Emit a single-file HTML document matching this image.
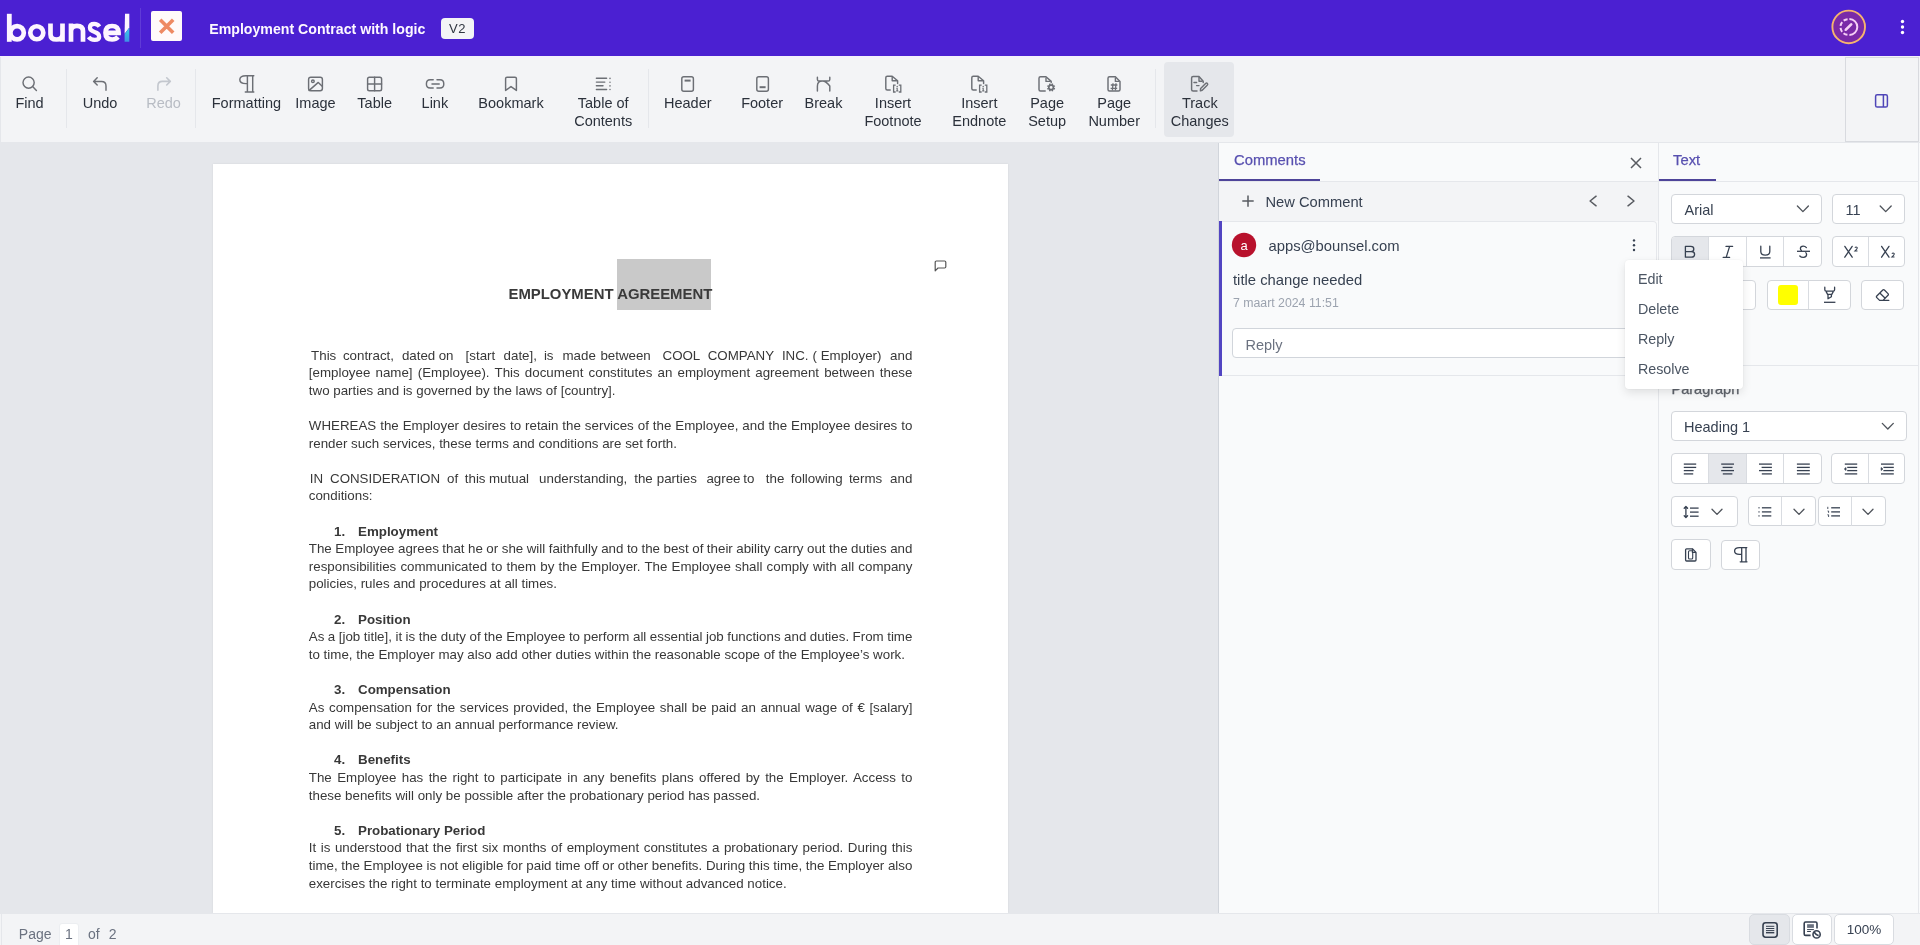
<!DOCTYPE html>
<html><head><meta charset="utf-8">
<style>
*{box-sizing:border-box;margin:0;padding:0}
html,body{width:1920px;height:945px;overflow:hidden;font-family:"Liberation Sans",sans-serif;background:#f3f4f6}
.t{position:absolute;white-space:nowrap}
#root{position:absolute;left:0;top:0;width:1920px;height:945px;overflow:hidden;will-change:transform}
.r{position:absolute}
.s{position:absolute;overflow:visible}
</style></head><body>
<div id="root">
<div class="r" style="left:0px;top:0px;width:1920px;height:56px;background:#4b20d2;border-radius:0px;"></div>
<svg class="s" style="left:0;top:0" width="140" height="56"><rect x="6.9" y="13.8" width="4.8" height="28" fill="#fdf5ff"/><circle cx="17.1" cy="32.75" r="6.7" fill="none" stroke="#fdf5ff" stroke-width="4.7"/><circle cx="36.8" cy="32.75" r="6.5" fill="none" stroke="#fdf5ff" stroke-width="4.7"/><path d="M50.5 23.6 V34.2 Q50.5 39.5 56.5 39.5 Q62.5 39.5 62.5 34.2 V23.6 M62.5 30 V41.8" fill="none" stroke="#fdf5ff" stroke-width="4.7"/><path d="M71 41.8 V31.2 Q71 25.9 77 25.9 Q83 25.9 83 31.2 V41.8 M71 35 V23.6" fill="none" stroke="#fdf5ff" stroke-width="4.7"/><path d="M99.4 26.6 Q97.6 23.8 94.2 23.8 Q89.9 23.8 89.9 27.6 Q89.9 30.6 94.6 31.9 Q99.2 33.2 99.2 36.9 Q99.2 39.8 94.6 39.8 Q90.6 39.8 88.6 37" fill="none" stroke="#fdf5ff" stroke-width="4.2"/><path d="M105.5 32.8 H118.6 Q118.6 26 112.1 26 Q105.5 26 105.5 32.8 Q105.5 39.5 112.1 39.5 Q115.8 39.5 118 37" fill="none" stroke="#fdf5ff" stroke-width="4.7"/><defs><linearGradient id="lg" x1="0" y1="0" x2="0" y2="1"><stop offset="0" stop-color="#38d0e6"/><stop offset="1" stop-color="#3f8fe6"/></linearGradient></defs><path d="M125 13.8 H129.3 V27.6 L124.6 33.8 Z" fill="#fdf5ff"/><path d="M129.3 27.8 V41.8 H124.6 V34 Z" fill="url(#lg)"/></svg>
<div class="r" style="left:140px;top:8px;width:1px;height:40px;background:rgba(255,255,255,0.12);border-radius:0px;"></div>
<div class="r" style="left:151px;top:11px;width:31px;height:30px;background:#fffafa;border-radius:2px;"></div>
<svg class="s" style="left:151px;top:11px" width="31" height="30"><path d="M9.2 8.8 L22.2 21.8 M22.2 8.8 L9.2 21.8" stroke="#ee8a63" stroke-width="3.6" stroke-linecap="butt"/></svg>
<div class="t" style="left:209.30px;top:21.25px;font-size:14.15px;line-height:17.69px;color:#fdf8ff;font-weight:bold;">Employment Contract with logic</div>
<div class="r" style="left:441px;top:18px;width:33px;height:21px;background:#f3f4f6;border-radius:4px;"></div>
<div class="t" style="left:441.00px;width:33px;text-align:center;top:21.07px;font-size:13px;line-height:16.25px;color:#2f3640;font-weight:normal;letter-spacing:0.6px;">V2</div>
<svg class="s" style="left:1828px;top:7px" width="42" height="42"><circle cx="20.7" cy="19.9" r="16.3" fill="#7a2aa8" stroke="#f6b46e" stroke-width="1.9"/><path d="M21.4 12.1 A7.9 7.9 0 0 1 21.4 27.9" fill="none" stroke="#f6d0f6" stroke-width="2"/><path d="M20.4 27.9 A7.9 7.9 0 0 1 20.4 12.1" fill="none" stroke="#f6d0f6" stroke-width="2" stroke-dasharray="4.2 2" stroke-dashoffset="-1"/><path d="M17.9 22.6 L23.2 17.4" stroke="#f6d0f6" stroke-width="2.7" stroke-linecap="round"/><path d="M16.6 23.9 L17.2 21.6 L18.9 23.3 Z" fill="#f6d0f6"/></svg>
<svg class="s" style="left:1896px;top:17px" width="14" height="20"><circle cx="6.5" cy="4.5" r="1.7" fill="#fff"/><circle cx="6.5" cy="10" r="1.7" fill="#fff"/><circle cx="6.5" cy="15.5" r="1.7" fill="#fff"/></svg>
<div class="r" style="left:0px;top:56px;width:1920px;height:86px;background:#f3f4f6;border-radius:0px;"></div>
<div class="r" style="left:0px;top:56px;width:1920px;height:3px;background:#f4f1fb;border-radius:0px;"></div>
<div class="r" style="left:0px;top:57px;width:1px;height:85px;background:#e5e7eb;border-radius:0px;"></div>
<div class="r" style="left:1164px;top:62px;width:70px;height:74.5px;background:#e5e7eb;border-radius:4px;"></div>
<div class="r" style="left:66px;top:69px;width:1px;height:59px;background:#e5e7eb;border-radius:0px;"></div>
<div class="r" style="left:195px;top:69px;width:1px;height:59px;background:#e5e7eb;border-radius:0px;"></div>
<div class="r" style="left:648px;top:69px;width:1px;height:59px;background:#e5e7eb;border-radius:0px;"></div>
<div class="r" style="left:1155px;top:69px;width:1px;height:59px;background:#e5e7eb;border-radius:0px;"></div>
<div class="r" style="left:1844.5px;top:57px;width:74px;height:84.5px;background:#f3f4f6;border:1px solid #d8dadf;border-radius:0px;"></div>
<div class="t" style="left:-30.50px;width:120px;text-align:center;top:93.72px;font-size:14.5px;line-height:18.12px;color:#2b313b;font-weight:normal;">Find</div>
<div class="t" style="left:40.00px;width:120px;text-align:center;top:93.72px;font-size:14.5px;line-height:18.12px;color:#2b313b;font-weight:normal;">Undo</div>
<div class="t" style="left:103.50px;width:120px;text-align:center;top:93.72px;font-size:14.5px;line-height:18.12px;color:#b8bcc4;font-weight:normal;">Redo</div>
<div class="t" style="left:186.40px;width:120px;text-align:center;top:93.72px;font-size:14.5px;line-height:18.12px;color:#2b313b;font-weight:normal;">Formatting</div>
<div class="t" style="left:255.50px;width:120px;text-align:center;top:93.72px;font-size:14.5px;line-height:18.12px;color:#2b313b;font-weight:normal;">Image</div>
<div class="t" style="left:314.70px;width:120px;text-align:center;top:93.72px;font-size:14.5px;line-height:18.12px;color:#2b313b;font-weight:normal;">Table</div>
<div class="t" style="left:374.90px;width:120px;text-align:center;top:93.72px;font-size:14.5px;line-height:18.12px;color:#2b313b;font-weight:normal;">Link</div>
<div class="t" style="left:451.00px;width:120px;text-align:center;top:93.72px;font-size:14.5px;line-height:18.12px;color:#2b313b;font-weight:normal;">Bookmark</div>
<div class="t" style="left:543.20px;width:120px;text-align:center;top:93.72px;font-size:14.5px;line-height:18.12px;color:#2b313b;font-weight:normal;">Table of</div>
<div class="t" style="left:543.20px;width:120px;text-align:center;top:111.52px;font-size:14.5px;line-height:18.12px;color:#2b313b;font-weight:normal;">Contents</div>
<div class="t" style="left:627.80px;width:120px;text-align:center;top:93.72px;font-size:14.5px;line-height:18.12px;color:#2b313b;font-weight:normal;">Header</div>
<div class="t" style="left:702.10px;width:120px;text-align:center;top:93.72px;font-size:14.5px;line-height:18.12px;color:#2b313b;font-weight:normal;">Footer</div>
<div class="t" style="left:763.50px;width:120px;text-align:center;top:93.72px;font-size:14.5px;line-height:18.12px;color:#2b313b;font-weight:normal;">Break</div>
<div class="t" style="left:833.00px;width:120px;text-align:center;top:93.72px;font-size:14.5px;line-height:18.12px;color:#2b313b;font-weight:normal;">Insert</div>
<div class="t" style="left:833.00px;width:120px;text-align:center;top:111.52px;font-size:14.5px;line-height:18.12px;color:#2b313b;font-weight:normal;">Footnote</div>
<div class="t" style="left:919.30px;width:120px;text-align:center;top:93.72px;font-size:14.5px;line-height:18.12px;color:#2b313b;font-weight:normal;">Insert</div>
<div class="t" style="left:919.30px;width:120px;text-align:center;top:111.52px;font-size:14.5px;line-height:18.12px;color:#2b313b;font-weight:normal;">Endnote</div>
<div class="t" style="left:987.10px;width:120px;text-align:center;top:93.72px;font-size:14.5px;line-height:18.12px;color:#2b313b;font-weight:normal;">Page</div>
<div class="t" style="left:987.10px;width:120px;text-align:center;top:111.52px;font-size:14.5px;line-height:18.12px;color:#2b313b;font-weight:normal;">Setup</div>
<div class="t" style="left:1054.20px;width:120px;text-align:center;top:93.72px;font-size:14.5px;line-height:18.12px;color:#2b313b;font-weight:normal;">Page</div>
<div class="t" style="left:1054.20px;width:120px;text-align:center;top:111.52px;font-size:14.5px;line-height:18.12px;color:#2b313b;font-weight:normal;">Number</div>
<div class="t" style="left:1139.80px;width:120px;text-align:center;top:93.72px;font-size:14.5px;line-height:18.12px;color:#2b313b;font-weight:normal;">Track</div>
<div class="t" style="left:1139.80px;width:120px;text-align:center;top:111.52px;font-size:14.5px;line-height:18.12px;color:#2b313b;font-weight:normal;">Changes</div>
<svg class="s" style="left:0;top:0" width="1920" height="142"><circle cx="28.6" cy="82.6" r="5.6" fill="none" stroke="#6c6f75" stroke-width="1.45" stroke-linecap="round" stroke-linejoin="round"/><path d="M32.6 86.6 L36.4 90.4" fill="none" stroke="#6c6f75" stroke-width="1.45" stroke-linecap="round" stroke-linejoin="round"/><path d="M97.2 77.8 L93.6 81.4 L97.2 85 M93.6 81.4 H101.5 Q106 81.4 106 85.9 V90.2" fill="none" stroke="#6c6f75" stroke-width="1.45" stroke-linecap="round" stroke-linejoin="round"/><path d="M166.7 77.8 L170.3 81.4 L166.7 85 M170.3 81.4 H162.4 Q157.9 81.4 157.9 85.9 V90.2" fill="none" stroke="#c3c7ce" stroke-width="1.6" stroke-linecap="round" stroke-linejoin="round"/><path d="M253.8 75.8 H246 Q239.8 75.8 239.8 79.8 Q239.8 83.6 246 83.6 H247.2 M247.4 75.8 V92 M252.7 75.8 V92 M245.3 92 H253.8" fill="none" stroke="#6c6f75" stroke-width="1.45" stroke-linecap="round" stroke-linejoin="round"/><rect x="308.6" y="77.2" width="13.8" height="13.6" rx="2.2" fill="none" stroke="#6c6f75" stroke-width="1.45" stroke-linecap="round" stroke-linejoin="round"/><circle cx="312.9" cy="81.3" r="1.3" fill="none" stroke="#6c6f75" stroke-width="1.45" stroke-linecap="round" stroke-linejoin="round"/><path d="M309.2 90.4 L318.3 82.4 L322.2 86.2" fill="none" stroke="#6c6f75" stroke-width="1.45" stroke-linecap="round" stroke-linejoin="round"/><rect x="367.6" y="77.2" width="14" height="13.6" rx="1.8" fill="none" stroke="#6c6f75" stroke-width="1.45" stroke-linecap="round" stroke-linejoin="round"/><path d="M374.6 77.2 V90.8 M367.6 84 H381.6" fill="none" stroke="#6c6f75" stroke-width="1.45" stroke-linecap="round" stroke-linejoin="round"/><path d="M433.2 79.8 H430.2 Q426.4 79.8 426.4 83.9 Q426.4 87.9 430.2 87.9 H433.2 M437 79.8 H440 Q443.8 79.8 443.8 83.9 Q443.8 87.9 440 87.9 H437 M432 83.9 H439.2" fill="none" stroke="#6c6f75" stroke-width="1.45" stroke-linecap="round" stroke-linejoin="round"/><path d="M505.6 90.4 V78.6 Q505.6 77.2 507 77.2 H515 Q516.4 77.2 516.4 78.6 V90.4 L511 86.6 Z" fill="none" stroke="#6c6f75" stroke-width="1.45" stroke-linecap="round" stroke-linejoin="round"/><path d="M596.4 78.3 H606.6 M596.4 82.1 H604.8 M596.4 85.8 H603 M596.4 89.4 H606.6" fill="none" stroke="#6c6f75" stroke-width="1.45" stroke-linecap="round" stroke-linejoin="round"/><path d="M610 78.3 V78.4 M610 82.1 V82.2 M610 85.8 V85.9 M610 89.4 V89.5" fill="none" stroke="#6c6f75" stroke-width="1.45" stroke-linecap="round" stroke-linejoin="round"/><rect x="681.8" y="76.8" width="11.6" height="14.4" rx="2" fill="none" stroke="#6c6f75" stroke-width="1.45" stroke-linecap="round" stroke-linejoin="round"/><path d="M684.6 80.6 H690.6" fill="none" stroke="#6c6f75" stroke-width="2"/><rect x="756.8" y="76.8" width="11.6" height="14.4" rx="2" fill="none" stroke="#6c6f75" stroke-width="1.45" stroke-linecap="round" stroke-linejoin="round"/><path d="M759.6 87.2 H765.6" fill="none" stroke="#6c6f75" stroke-width="2"/><path d="M817.4 77.2 V79.4 Q817.4 81 819 81 H828.2 Q829.8 81 829.8 79.4 V77.2 M817.4 91 V86.2 Q817.4 81 822.4 81 M822.4 81 Q826 81 829.8 86 V91" fill="none" stroke="#6c6f75" stroke-width="1.45" stroke-linecap="round" stroke-linejoin="round"/><path d="M890.1999999999999 90 H887.3 Q885.8 90 885.8 88.5 V77.7 Q885.8 76.2 887.3 76.2 H892.1999999999999 L897.5999999999999 80.8 V83.6" fill="none" stroke="#6c6f75" stroke-width="1.45" stroke-linecap="round" stroke-linejoin="round"/><path d="M892.1999999999999 76.8 V80.8 H896.9999999999999" fill="none" stroke="#6c6f75" stroke-width="1.4" stroke-linejoin="round"/><path d="M894.9999999999999 85.1 H893.5999999999999 V92 H894.9999999999999 M899.4 85.1 H900.8 V92 H899.4" fill="none" stroke="#6c6f75" stroke-width="1.3" stroke-linecap="square"/><circle cx="897.1999999999999" cy="86.4" r="0.75" fill="#6c6f75"/><path d="M896.3 88.3 H897.1999999999999 V90.9 M896.1999999999999 90.9 H898.3" fill="none" stroke="#6c6f75" stroke-width="1.1"/><path d="M976.1999999999999 90 H973.3 Q971.8 90 971.8 88.5 V77.7 Q971.8 76.2 973.3 76.2 H978.1999999999999 L983.5999999999999 80.8 V83.6" fill="none" stroke="#6c6f75" stroke-width="1.45" stroke-linecap="round" stroke-linejoin="round"/><path d="M978.1999999999999 76.8 V80.8 H982.9999999999999" fill="none" stroke="#6c6f75" stroke-width="1.4" stroke-linejoin="round"/><path d="M980.9999999999999 85.1 H979.5999999999999 V92 H980.9999999999999 M985.4 85.1 H986.8 V92 H985.4" fill="none" stroke="#6c6f75" stroke-width="1.3" stroke-linecap="square"/><circle cx="983.1999999999999" cy="86.4" r="0.75" fill="#6c6f75"/><path d="M982.3 88.3 H983.1999999999999 V90.9 M982.1999999999999 90.9 H984.3" fill="none" stroke="#6c6f75" stroke-width="1.1"/><path d="M1045.2 91 H1040.5 Q1039 91 1039 89.5 V78.3 Q1039 76.8 1040.5 76.8 H1046 L1051.2 81.4 V82.6" fill="none" stroke="#6c6f75" stroke-width="1.45" stroke-linecap="round" stroke-linejoin="round"/><path d="M1046 77.39999999999999 V81.4 H1050.6000000000001" fill="none" stroke="#6c6f75" stroke-width="1.4" stroke-linejoin="round"/><circle cx="1051.1" cy="87.4" r="2.3" fill="none" stroke="#6c6f75" stroke-width="1.7"/><path d="M1053.50 88.39 L1054.89 88.97 M1052.09 89.80 L1052.67 91.19 M1050.11 89.80 L1049.53 91.19 M1048.70 88.39 L1047.31 88.97 M1048.70 86.41 L1047.31 85.83 M1050.11 85.00 L1049.53 83.61 M1052.09 85.00 L1052.67 83.61 M1053.50 86.41 L1054.89 85.83" stroke="#6c6f75" stroke-width="1.5"/><path d="M1109.5 91 Q1108 91 1108 89.5 V78.3 Q1108 76.8 1109.5 76.8 H1115.4 L1120 81.4 V89.5 Q1120 91 1118.5 91 Z" fill="none" stroke="#6c6f75" stroke-width="1.45" stroke-linecap="round" stroke-linejoin="round"/><path d="M1115.4 77.4 V81.4 H1119.4" fill="none" stroke="#6c6f75" stroke-width="1.4" stroke-linejoin="round"/><path d="M1110.8 85 H1117.4 M1110.6 88.4 H1117.2 M1113 83.2 L1112.4 90.4 M1116 83.2 L1115.4 90.4" fill="none" stroke="#6c6f75" stroke-width="1.3"/><path d="M1197 91 H1193.1 Q1191.6 91 1191.6 89.5 V77.9 Q1191.6 76.4 1193.1 76.4 H1199 L1203.2 81.2 V82.4" fill="none" stroke="#6c6f75" stroke-width="1.45" stroke-linecap="round" stroke-linejoin="round"/><path d="M1199 77 V81.2 H1202.6" fill="none" stroke="#6c6f75" stroke-width="1.4" stroke-linejoin="round"/><path d="M1194 82.4 H1196.6 M1196.6 85.6 H1199" fill="none" stroke="#6c6f75" stroke-width="1.45" stroke-linecap="round" stroke-linejoin="round"/><path d="M1200.4 90.8 L1200.6 88.6 L1205.6 83.6 Q1206.6 82.6 1207.4 83.4 Q1208.2 84.2 1207.2 85.2 L1202.2 90.2 Z" fill="none" stroke="#6c6f75" stroke-width="1.45" stroke-linecap="round" stroke-linejoin="round"/><rect x="1875.6" y="94.8" width="11.8" height="12.2" rx="1.6" fill="none" stroke="#4f46b8" stroke-width="1.5"/><path d="M1883.4 94.8 V107" stroke="#4f46b8" stroke-width="1.5"/></svg>
<div class="r" style="left:0px;top:142px;width:1218px;height:771px;background:#e5e7eb;border-radius:0px;"></div>
<div class="r" style="left:213px;top:164px;width:795px;height:749px;background:#ffffff;border-radius:0px;box-shadow:0 0 2px rgba(0,0,0,0.08);"></div>
<div class="r" style="left:617px;top:259px;width:94px;height:51px;background:#c9c9c9;border-radius:0px;"></div>
<div class="t" style="left:410.40px;width:400px;text-align:center;top:284.63px;font-size:14.9px;line-height:18.62px;color:#3a3a3a;font-weight:bold;">EMPLOYMENT AGREEMENT</div>
<svg class="s" style="left:930px;top:256px" width="20" height="20"><path d="M5.2 14.8 V6.2 Q5.2 5 6.4 5 H14.6 Q15.8 5 15.8 6.2 V10.8 Q15.8 12 14.6 12 H8 Z" fill="none" stroke="#555" stroke-width="1.2" stroke-linejoin="round"/></svg>
<div class="t" style="left:311.10px;top:347.55px;font-size:13.333px;line-height:16.67px;color:#383838;font-weight:normal;">This</div>
<div class="t" style="left:342.90px;top:347.55px;font-size:13.333px;line-height:16.67px;color:#383838;font-weight:normal;">contract,</div>
<div class="t" style="left:401.90px;top:347.55px;font-size:13.333px;line-height:16.67px;color:#383838;font-weight:normal;">dated</div>
<div class="t" style="left:438.70px;top:347.55px;font-size:13.333px;line-height:16.67px;color:#383838;font-weight:normal;">on</div>
<div class="t" style="left:465.60px;top:347.55px;font-size:13.333px;line-height:16.67px;color:#383838;font-weight:normal;">[start</div>
<div class="t" style="left:503.60px;top:347.55px;font-size:13.333px;line-height:16.67px;color:#383838;font-weight:normal;">date],</div>
<div class="t" style="left:543.90px;top:347.55px;font-size:13.333px;line-height:16.67px;color:#383838;font-weight:normal;">is</div>
<div class="t" style="left:562.50px;top:347.55px;font-size:13.333px;line-height:16.67px;color:#383838;font-weight:normal;">made</div>
<div class="t" style="left:600.40px;top:347.55px;font-size:13.333px;line-height:16.67px;color:#383838;font-weight:normal;">between</div>
<div class="t" style="left:662.50px;top:347.55px;font-size:13.333px;line-height:16.67px;color:#383838;font-weight:normal;">COOL</div>
<div class="t" style="left:707.70px;top:347.55px;font-size:13.333px;line-height:16.67px;color:#383838;font-weight:normal;">COMPANY</div>
<div class="t" style="left:781.90px;top:347.55px;font-size:13.333px;line-height:16.67px;color:#383838;font-weight:normal;">INC.</div>
<div class="t" style="left:812.60px;top:347.55px;font-size:13.333px;line-height:16.67px;color:#383838;font-weight:normal;">(</div>
<div class="t" style="left:820.70px;top:347.55px;font-size:13.333px;line-height:16.67px;color:#383838;font-weight:normal;">Employer)</div>
<div class="t" style="left:890.10px;top:347.55px;font-size:13.333px;line-height:16.67px;color:#383838;font-weight:normal;">and</div>
<div class="t" style="left:308.80px;top:365.15px;font-size:13.333px;line-height:16.67px;color:#383838;font-weight:normal;width:603.6px;text-align:justify;text-align-last:justify;white-space:nowrap;">[employee name] (Employee). This document constitutes an employment agreement between these</div>
<div class="t" style="left:308.80px;top:382.75px;font-size:13.333px;line-height:16.67px;color:#383838;font-weight:normal;white-space:nowrap;">two parties and is governed by the laws of [country].</div>
<div class="t" style="left:308.80px;top:417.95px;font-size:13.333px;line-height:16.67px;color:#383838;font-weight:normal;width:603.6px;text-align:justify;text-align-last:justify;white-space:nowrap;">WHEREAS the Employer desires to retain the services of the Employee, and the Employee desires to</div>
<div class="t" style="left:308.80px;top:435.55px;font-size:13.333px;line-height:16.67px;color:#383838;font-weight:normal;white-space:nowrap;">render such services, these terms and conditions are set forth.</div>
<div class="t" style="left:309.80px;top:470.75px;font-size:13.333px;line-height:16.67px;color:#383838;font-weight:normal;">IN</div>
<div class="t" style="left:330.00px;top:470.75px;font-size:13.333px;line-height:16.67px;color:#383838;font-weight:normal;">CONSIDERATION</div>
<div class="t" style="left:447.10px;top:470.75px;font-size:13.333px;line-height:16.67px;color:#383838;font-weight:normal;">of</div>
<div class="t" style="left:464.80px;top:470.75px;font-size:13.333px;line-height:16.67px;color:#383838;font-weight:normal;">this</div>
<div class="t" style="left:489.00px;top:470.75px;font-size:13.333px;line-height:16.67px;color:#383838;font-weight:normal;">mutual</div>
<div class="t" style="left:539.10px;top:470.75px;font-size:13.333px;line-height:16.67px;color:#383838;font-weight:normal;">understanding,</div>
<div class="t" style="left:634.20px;top:470.75px;font-size:13.333px;line-height:16.67px;color:#383838;font-weight:normal;">the</div>
<div class="t" style="left:656.80px;top:470.75px;font-size:13.333px;line-height:16.67px;color:#383838;font-weight:normal;">parties</div>
<div class="t" style="left:706.40px;top:470.75px;font-size:13.333px;line-height:16.67px;color:#383838;font-weight:normal;">agree</div>
<div class="t" style="left:743.20px;top:470.75px;font-size:13.333px;line-height:16.67px;color:#383838;font-weight:normal;">to</div>
<div class="t" style="left:765.80px;top:470.75px;font-size:13.333px;line-height:16.67px;color:#383838;font-weight:normal;">the</div>
<div class="t" style="left:790.80px;top:470.75px;font-size:13.333px;line-height:16.67px;color:#383838;font-weight:normal;">following</div>
<div class="t" style="left:848.90px;top:470.75px;font-size:13.333px;line-height:16.67px;color:#383838;font-weight:normal;">terms</div>
<div class="t" style="left:890.10px;top:470.75px;font-size:13.333px;line-height:16.67px;color:#383838;font-weight:normal;">and</div>
<div class="t" style="left:308.80px;top:488.35px;font-size:13.333px;line-height:16.67px;color:#383838;font-weight:normal;white-space:nowrap;">conditions:</div>
<div class="t" style="left:334.00px;top:523.55px;font-size:13.333px;line-height:16.67px;color:#383838;font-weight:bold;">1.</div>
<div class="t" style="left:358.00px;top:523.55px;font-size:13.333px;line-height:16.67px;color:#383838;font-weight:bold;">Employment</div>
<div class="t" style="left:308.80px;top:541.15px;font-size:13.333px;line-height:16.67px;color:#383838;font-weight:normal;width:603.6px;text-align:justify;text-align-last:justify;white-space:nowrap;word-spacing:-0.215px;">The Employee agrees that he or she will faithfully and to the best of their ability carry out the duties and</div>
<div class="t" style="left:308.80px;top:558.75px;font-size:13.333px;line-height:16.67px;color:#383838;font-weight:normal;width:603.6px;text-align:justify;text-align-last:justify;white-space:nowrap;">responsibilities communicated to them by the Employer. The Employee shall comply with all company</div>
<div class="t" style="left:308.80px;top:576.35px;font-size:13.333px;line-height:16.67px;color:#383838;font-weight:normal;white-space:nowrap;">policies, rules and procedures at all times.</div>
<div class="t" style="left:334.00px;top:611.55px;font-size:13.333px;line-height:16.67px;color:#383838;font-weight:bold;">2.</div>
<div class="t" style="left:358.00px;top:611.55px;font-size:13.333px;line-height:16.67px;color:#383838;font-weight:bold;">Position</div>
<div class="t" style="left:308.80px;top:629.15px;font-size:13.333px;line-height:16.67px;color:#383838;font-weight:normal;width:603.6px;text-align:justify;text-align-last:justify;white-space:nowrap;word-spacing:-0.217px;">As a [job title], it is the duty of the Employee to perform all essential job functions and duties. From time</div>
<div class="t" style="left:308.80px;top:646.75px;font-size:13.333px;line-height:16.67px;color:#383838;font-weight:normal;white-space:nowrap;">to time, the Employer may also add other duties within the reasonable scope of the Employee&#8217;s work.</div>
<div class="t" style="left:334.00px;top:681.95px;font-size:13.333px;line-height:16.67px;color:#383838;font-weight:bold;">3.</div>
<div class="t" style="left:358.00px;top:681.95px;font-size:13.333px;line-height:16.67px;color:#383838;font-weight:bold;">Compensation</div>
<div class="t" style="left:308.80px;top:699.55px;font-size:13.333px;line-height:16.67px;color:#383838;font-weight:normal;width:603.6px;text-align:justify;text-align-last:justify;white-space:nowrap;">As compensation for the services provided, the Employee shall be paid an annual wage of &#8364; [salary]</div>
<div class="t" style="left:308.80px;top:717.15px;font-size:13.333px;line-height:16.67px;color:#383838;font-weight:normal;white-space:nowrap;">and will be subject to an annual performance review.</div>
<div class="t" style="left:334.00px;top:752.35px;font-size:13.333px;line-height:16.67px;color:#383838;font-weight:bold;">4.</div>
<div class="t" style="left:358.00px;top:752.35px;font-size:13.333px;line-height:16.67px;color:#383838;font-weight:bold;">Benefits</div>
<div class="t" style="left:308.80px;top:769.95px;font-size:13.333px;line-height:16.67px;color:#383838;font-weight:normal;width:603.6px;text-align:justify;text-align-last:justify;white-space:nowrap;">The Employee has the right to participate in any benefits plans offered by the Employer. Access to</div>
<div class="t" style="left:308.80px;top:787.55px;font-size:13.333px;line-height:16.67px;color:#383838;font-weight:normal;white-space:nowrap;">these benefits will only be possible after the probationary period has passed.</div>
<div class="t" style="left:334.00px;top:822.75px;font-size:13.333px;line-height:16.67px;color:#383838;font-weight:bold;">5.</div>
<div class="t" style="left:358.00px;top:822.75px;font-size:13.333px;line-height:16.67px;color:#383838;font-weight:bold;">Probationary Period</div>
<div class="t" style="left:308.80px;top:840.35px;font-size:13.333px;line-height:16.67px;color:#383838;font-weight:normal;width:603.6px;text-align:justify;text-align-last:justify;white-space:nowrap;">It is understood that the first six months of employment constitutes a probationary period. During this</div>
<div class="t" style="left:308.80px;top:857.95px;font-size:13.333px;line-height:16.67px;color:#383838;font-weight:normal;width:603.6px;text-align:justify;text-align-last:justify;white-space:nowrap;word-spacing:-0.062px;">time, the Employee is not eligible for paid time off or other benefits. During this time, the Employer also</div>
<div class="t" style="left:308.80px;top:875.55px;font-size:13.333px;line-height:16.67px;color:#383838;font-weight:normal;white-space:nowrap;">exercises the right to terminate employment at any time without advanced notice.</div>
<div class="r" style="left:1218px;top:142px;width:440px;height:771px;background:#f9fafb;border-radius:0px;"></div>
<div class="r" style="left:1218px;top:142px;width:1px;height:771px;background:#d1d5db;border-radius:0px;"></div>
<div class="r" style="left:1218px;top:142px;width:440px;height:1px;background:#e5e7eb;border-radius:0px;"></div>
<div class="t" style="left:1234.00px;top:151.22px;font-size:14.8px;line-height:18.5px;color:#5850b0;font-weight:500;-webkit-text-stroke:0.25px #5850b0;">Comments</div>
<div class="r" style="left:1219px;top:179px;width:101px;height:2px;background:#4e4499;border-radius:0px;"></div>
<div class="r" style="left:1219px;top:181px;width:439px;height:1px;background:#e5e7eb;border-radius:0px;"></div>
<svg class="s" style="left:1626px;top:153px" width="20" height="20"><path d="M5 5 L15 15 M15 5 L5 15" stroke="#585b61" stroke-width="1.5"/></svg>
<div class="r" style="left:1219px;top:182px;width:439px;height:38.5px;background:#f3f4f6;border-radius:0px;"></div>
<svg class="s" style="left:1238px;top:191px" width="20" height="20"><path d="M10 4.4 V15.8 M4.3 10.1 H15.7" stroke="#585b61" stroke-width="1.5"/></svg>
<div class="t" style="left:1265.50px;top:192.52px;font-size:14.7px;line-height:18.38px;color:#374151;font-weight:normal;">New Comment</div>
<svg class="s" style="left:1583px;top:191px" width="60" height="20"><path d="M13.1 5.2 L7.1 10 L13.1 14.8" fill="none" stroke="#585b61" stroke-width="1.5" stroke-linecap="round" stroke-linejoin="round"/><path d="M45 5.2 L51 10 L45 14.8" fill="none" stroke="#585b61" stroke-width="1.5" stroke-linecap="round" stroke-linejoin="round"/></svg>
<div class="r" style="left:1219px;top:220.5px;width:438px;height:155px;background:#f9fafb;border:1px solid #e5e7eb;border-radius:0px;border-left:none;border-top-right-radius:4px;"></div>
<div class="r" style="left:1219px;top:220.5px;width:3px;height:155px;background:#5245c2;border-radius:0px;"></div>
<svg class="s" style="left:1231px;top:232px" width="26" height="26"><circle cx="13" cy="13" r="12.2" fill="#b8112c"/></svg>
<div class="t" style="left:1234.00px;width:20px;text-align:center;top:237.57px;font-size:13px;line-height:16.25px;color:#ffffff;font-weight:normal;">a</div>
<div class="t" style="left:1268.50px;top:236.92px;font-size:14.8px;line-height:18.5px;color:#374151;font-weight:normal;">apps@bounsel.com</div>
<svg class="s" style="left:1629px;top:236px" width="10" height="18"><circle cx="5" cy="4.4" r="1.2" fill="#374151"/><circle cx="5" cy="9.2" r="1.2" fill="#374151"/><circle cx="5" cy="14" r="1.2" fill="#374151"/></svg>
<div class="t" style="left:1233.00px;top:271.22px;font-size:14.8px;line-height:18.5px;color:#374151;font-weight:normal;">title change needed</div>
<div class="t" style="left:1233.00px;top:296.15px;font-size:12.3px;line-height:15.38px;color:#9ca3af;font-weight:normal;">7 maart 2024 11:51</div>
<div class="r" style="left:1232px;top:328px;width:410px;height:30px;background:#ffffff;border:1px solid #d1d5db;border-radius:4px;"></div>
<div class="t" style="left:1245.50px;top:336.22px;font-size:14.5px;line-height:18.12px;color:#6b7280;font-weight:normal;">Reply</div>
<div class="r" style="left:1658px;top:142px;width:262px;height:771px;background:#f9fafb;border-radius:0px;"></div>
<div class="r" style="left:1658px;top:142px;width:1px;height:771px;background:#e5e7eb;border-radius:0px;"></div>
<div class="r" style="left:1658px;top:142px;width:262px;height:1px;background:#e5e7eb;border-radius:0px;"></div>
<div class="r" style="left:1918px;top:142px;width:1px;height:771px;background:#e5e7eb;border-radius:0px;"></div>
<div class="t" style="left:1673.00px;top:151.22px;font-size:14.8px;line-height:18.5px;color:#5850b0;font-weight:500;-webkit-text-stroke:0.25px #5850b0;">Text</div>
<div class="r" style="left:1659px;top:179px;width:57px;height:2px;background:#4e4499;border-radius:0px;"></div>
<div class="r" style="left:1659px;top:181px;width:259px;height:1px;background:#e5e7eb;border-radius:0px;"></div>
<div class="r" style="left:1671px;top:194px;width:151px;height:30px;background:#ffffff;border:1px solid #d3d6db;border-radius:4px;"></div>
<div class="t" style="left:1684.50px;top:201.22px;font-size:14.5px;line-height:18.12px;color:#374151;font-weight:normal;">Arial</div>
<div class="r" style="left:1832px;top:194px;width:73px;height:30px;background:#ffffff;border:1px solid #d3d6db;border-radius:4px;"></div>
<div class="t" style="left:1845.50px;top:201.22px;font-size:14.5px;line-height:18.12px;color:#374151;font-weight:normal;">11</div>
<div class="r" style="left:1670.5px;top:236px;width:151.5px;height:31px;background:#ffffff;border:1px solid #d3d6db;border-radius:4px;"></div>
<div class="r" style="left:1671.5px;top:237px;width:36.5px;height:29px;background:#e5e7eb;border-radius:0px;border-radius:3px 0 0 3px;"></div>
<div class="r" style="left:1708px;top:237px;width:1px;height:29px;background:#d9dce1;border-radius:0px;"></div>
<div class="r" style="left:1746px;top:237px;width:1px;height:29px;background:#d9dce1;border-radius:0px;"></div>
<div class="r" style="left:1783px;top:237px;width:1px;height:29px;background:#d9dce1;border-radius:0px;"></div>
<div class="r" style="left:1831.5px;top:236px;width:73px;height:31px;background:#ffffff;border:1px solid #d3d6db;border-radius:4px;"></div>
<div class="r" style="left:1868px;top:237px;width:1px;height:29px;background:#d9dce1;border-radius:0px;"></div>
<div class="r" style="left:1671px;top:279.5px;width:84.5px;height:30.5px;background:#ffffff;border:1px solid #d3d6db;border-radius:4px;"></div>
<div class="r" style="left:1766.5px;top:279.5px;width:84.5px;height:30.5px;background:#ffffff;border:1px solid #d3d6db;border-radius:4px;"></div>
<div class="r" style="left:1808.4px;top:280.3px;width:1px;height:29px;background:#d9dce1;border-radius:0px;"></div>
<div class="r" style="left:1778.3px;top:284.8px;width:19.6px;height:19.8px;background:#ffff00;border-radius:3px;"></div>
<div class="r" style="left:1861px;top:279.5px;width:43px;height:30.5px;background:#ffffff;border:1px solid #d3d6db;border-radius:4px;"></div>
<div class="r" style="left:1658px;top:365px;width:260px;height:1px;background:#e5e7eb;border-radius:0px;"></div>
<div class="t" style="left:1671.50px;top:380.12px;font-size:14.5px;line-height:18.12px;color:#5f646c;font-weight:normal;-webkit-text-stroke:0.3px #5f646c;">Paragraph</div>
<div class="r" style="left:1671px;top:411px;width:235.5px;height:30px;background:#ffffff;border:1px solid #d3d6db;border-radius:4px;"></div>
<div class="t" style="left:1684.00px;top:418.22px;font-size:14.5px;line-height:18.12px;color:#374151;font-weight:normal;">Heading 1</div>
<div class="r" style="left:1670.5px;top:453px;width:151.5px;height:30.5px;background:#ffffff;border:1px solid #d3d6db;border-radius:4px;"></div>
<div class="r" style="left:1709px;top:454px;width:37px;height:28.5px;background:#e5e7eb;border-radius:0px;"></div>
<div class="r" style="left:1708px;top:454px;width:1px;height:29px;background:#d9dce1;border-radius:0px;"></div>
<div class="r" style="left:1746px;top:454px;width:1px;height:29px;background:#d9dce1;border-radius:0px;"></div>
<div class="r" style="left:1783px;top:454px;width:1px;height:29px;background:#d9dce1;border-radius:0px;"></div>
<div class="r" style="left:1831px;top:453px;width:73.5px;height:30.5px;background:#ffffff;border:1px solid #d3d6db;border-radius:4px;"></div>
<div class="r" style="left:1868px;top:454px;width:1px;height:29px;background:#d9dce1;border-radius:0px;"></div>
<div class="r" style="left:1671px;top:496px;width:66.5px;height:30.7px;background:#ffffff;border:1px solid #d3d6db;border-radius:4px;"></div>
<div class="r" style="left:1748.4px;top:496.3px;width:68px;height:30.2px;background:#ffffff;border:1px solid #d3d6db;border-radius:4px;"></div>
<div class="r" style="left:1781.4px;top:496.8px;width:1px;height:29.5px;background:#d9dce1;border-radius:0px;"></div>
<div class="r" style="left:1817.6px;top:496.3px;width:68px;height:30.2px;background:#ffffff;border:1px solid #d3d6db;border-radius:4px;"></div>
<div class="r" style="left:1850.5px;top:496.8px;width:1px;height:29.5px;background:#d9dce1;border-radius:0px;"></div>
<div class="r" style="left:1671px;top:539px;width:39.6px;height:30.7px;background:#ffffff;border:1px solid #d3d6db;border-radius:4px;"></div>
<div class="r" style="left:1721.4px;top:539.5px;width:39px;height:30.2px;background:#ffffff;border:1px solid #d3d6db;border-radius:4px;"></div>
<svg class="s" style="left:0;top:0" width="1920" height="945"><path d="M1797.4 206.0 L1802.9 211.60000000000002 L1808.4 206.0" fill="none" stroke="#50555c" stroke-width="1.35" stroke-linecap="round" stroke-linejoin="round"/><path d="M1880.2 206.0 L1885.7 211.60000000000002 L1891.2 206.0" fill="none" stroke="#50555c" stroke-width="1.35" stroke-linecap="round" stroke-linejoin="round"/><path d="M1882.3 423.4 L1887.8 429.0 L1893.3 423.4" fill="none" stroke="#50555c" stroke-width="1.35" stroke-linecap="round" stroke-linejoin="round"/><path d="M1685.4 246.4 V257.2 H1691.4 Q1694.6 257.2 1694.6 254.2 Q1694.6 251.6 1691.2 251.6 H1685.4 M1685.4 246.4 H1690.8 Q1693.8 246.4 1693.8 249 Q1693.8 251.6 1691 251.6" fill="none" stroke="#374151" stroke-width="1.3" stroke-linecap="round" stroke-linejoin="round"/><path d="M1726 246.4 H1732.6 M1723.2 257.4 H1729.6 M1729.6 246.4 L1726.2 257.4" fill="none" stroke="#374151" stroke-width="1.3" stroke-linecap="round" stroke-linejoin="round"/><path d="M1760.8 246.2 V251.6 Q1760.8 255.2 1765.3 255.2 Q1769.8 255.2 1769.8 251.6 V246.2" fill="none" stroke="#374151" stroke-width="1.3" stroke-linecap="round" stroke-linejoin="round"/><path d="M1760 257.9 H1770.6" stroke="#374151" stroke-width="1.3"/><path d="M1806.4 247.6 Q1805.2 246.2 1803.2 246.2 Q1800.4 246.2 1800.4 248.6 Q1800.4 249.8 1801.4 250.6 M1805.8 252.6 Q1806.6 253.4 1806.6 254.6 Q1806.6 257.4 1803.4 257.4 Q1801 257.4 1799.8 256" fill="none" stroke="#374151" stroke-width="1.3" stroke-linecap="round" stroke-linejoin="round"/><path d="M1797 251.3 H1810" stroke="#374151" stroke-width="1.3"/><path d="M1844.8 246.4 L1852.2 257.2 M1852.2 246.4 L1844.8 257.2" fill="none" stroke="#374151" stroke-width="1.3" stroke-linecap="round" stroke-linejoin="round"/><path d="M1854.9 247.8 Q1855.4 247 1856.2 247 Q1857.3 247 1857.3 248 Q1857.3 248.8 1855 251 H1857.5" fill="none" stroke="#374151" stroke-width="1.1"/><path d="M1881.6 246.4 L1889 257.2 M1889 246.4 L1881.6 257.2" fill="none" stroke="#374151" stroke-width="1.3" stroke-linecap="round" stroke-linejoin="round"/><path d="M1891.9 253.8 Q1892.4 253 1893.2 253 Q1894.3 253 1894.3 254 Q1894.3 254.8 1892 257 H1894.5" fill="none" stroke="#374151" stroke-width="1.1"/><path d="M1824.8 287.2 V289.8 Q1824.8 291.2 1826.2 291.2 H1833.2 Q1834.6 291.2 1834.6 289.8 V287.2 M1826 291.4 L1827.6 294.4 H1831.8 L1833.4 291.4 M1828 294.6 V298.8 L1831.4 296.8 V294.6" fill="none" stroke="#374151" stroke-width="1.3" stroke-linecap="round" stroke-linejoin="round"/><path d="M1824 302.3 H1835.4" stroke="#374151" stroke-width="1.3"/><path d="M1879.6 300.4 L1876.8 297.6 Q1876 296.8 1876.8 296 L1882.8 290 Q1883.6 289.2 1884.4 290 L1888 293.6 Q1888.8 294.4 1888 295.2 L1883 300.4 Z M1879.8 293 L1885.2 298.2 M1883 300.4 H1888.8" fill="none" stroke="#374151" stroke-width="1.3" stroke-linecap="round" stroke-linejoin="round"/><path d="M1683.8 464.1 H1696.2" stroke="#374151" stroke-width="1.3"/><path d="M1683.8 467.4 H1696.2" stroke="#374151" stroke-width="1.3"/><path d="M1683.8 470.6 H1693.6" stroke="#374151" stroke-width="1.3"/><path d="M1683.8 473.9 H1693.2" stroke="#374151" stroke-width="1.3"/><path d="M1721.2 464.1 H1734" stroke="#374151" stroke-width="1.3"/><path d="M1722.6 467.4 H1732.6" stroke="#374151" stroke-width="1.3"/><path d="M1721.2 470.6 H1734" stroke="#374151" stroke-width="1.3"/><path d="M1722.8 473.9 H1732.4" stroke="#374151" stroke-width="1.3"/><path d="M1759 464.1 H1771.9" stroke="#374151" stroke-width="1.3"/><path d="M1761.6 467.4 H1771.9" stroke="#374151" stroke-width="1.3"/><path d="M1759 470.6 H1771.9" stroke="#374151" stroke-width="1.3"/><path d="M1761.8 473.9 H1771.9" stroke="#374151" stroke-width="1.3"/><path d="M1796.9 464.1 H1809.8" stroke="#374151" stroke-width="1.3"/><path d="M1796.9 467.4 H1809.8" stroke="#374151" stroke-width="1.3"/><path d="M1796.9 470.6 H1809.8" stroke="#374151" stroke-width="1.3"/><path d="M1796.9 473.9 H1809.8" stroke="#374151" stroke-width="1.3"/><path d="M1844.8 464.1 H1857.2" stroke="#374151" stroke-width="1.3"/><path d="M1847.2 467.4 H1857.2" stroke="#374151" stroke-width="1.3"/><path d="M1847.2 470.6 H1857.2" stroke="#374151" stroke-width="1.3"/><path d="M1844.8 473.9 H1857.2" stroke="#374151" stroke-width="1.3"/><path d="M1846 467.6 L1844.4 469 L1846 470.4 Z" fill="#374151" stroke="#374151" stroke-width="0.8"/><path d="M1881 464.1 H1893.8" stroke="#374151" stroke-width="1.3"/><path d="M1883.4 467.4 H1893.8" stroke="#374151" stroke-width="1.3"/><path d="M1883.4 470.6 H1893.8" stroke="#374151" stroke-width="1.3"/><path d="M1881 473.9 H1893.8" stroke="#374151" stroke-width="1.3"/><path d="M1881.2 467.6 L1882.8 469 L1881.2 470.4 Z" fill="#374151" stroke="#374151" stroke-width="0.8"/><path d="M1685.9 506.6 V517.4 M1684.2 508.2 L1685.9 506.4 L1687.6 508.2 M1684.2 515.8 L1685.9 517.6 L1687.6 515.8" fill="none" stroke="#374151" stroke-width="1.3" stroke-linecap="round" stroke-linejoin="round"/><path d="M1690 508.1 H1698.6" stroke="#374151" stroke-width="1.3"/><path d="M1690 512.1 H1698.6" stroke="#374151" stroke-width="1.3"/><path d="M1690 516.2 H1698.6" stroke="#374151" stroke-width="1.3"/><path d="M1712.0 509.2 L1717 514.4 L1722.0 509.2" fill="none" stroke="#50555c" stroke-width="1.35" stroke-linecap="round" stroke-linejoin="round"/><rect x="1758.4" y="507.2" width="1.2" height="1.2" fill="#374151"/><rect x="1758.4" y="511.29999999999995" width="1.2" height="1.2" fill="#374151"/><rect x="1758.4" y="515.3" width="1.2" height="1.2" fill="#374151"/><path d="M1761.9 507.8 H1771.3" stroke="#374151" stroke-width="1.3"/><path d="M1761.9 511.9 H1771.3" stroke="#374151" stroke-width="1.3"/><path d="M1761.9 515.9 H1771.3" stroke="#374151" stroke-width="1.3"/><path d="M1794.0 509.2 L1799 514.4 L1804.0 509.2" fill="none" stroke="#50555c" stroke-width="1.35" stroke-linecap="round" stroke-linejoin="round"/><path d="M1827.8 506.8 V509 M1827.6 511 H1828.6 V512.8 M1827.4 514.8 H1828.6 V517" stroke="#374151" stroke-width="0.9" fill="none"/><path d="M1831.2 507.8 H1840" stroke="#374151" stroke-width="1.3"/><path d="M1831.2 511.9 H1840" stroke="#374151" stroke-width="1.3"/><path d="M1831.2 515.9 H1840" stroke="#374151" stroke-width="1.3"/><path d="M1863.0 509.2 L1868 514.4 L1873.0 509.2" fill="none" stroke="#50555c" stroke-width="1.35" stroke-linecap="round" stroke-linejoin="round"/><path d="M1686.6 548.8 H1692.4 L1696 552.4 V560 Q1696 561 1695 561 H1686.6 Q1685.6 561 1685.6 560 V549.8 Q1685.6 548.8 1686.6 548.8 Z" fill="none" stroke="#374151" stroke-width="1.3" stroke-linecap="round" stroke-linejoin="round"/><path d="M1692.4 548.8 V552.4 H1696" fill="none" stroke="#374151" stroke-width="1.1"/><rect x="1688.5" y="550.8" width="4.2" height="8.2" rx="1" fill="none" stroke="#374151" stroke-width="1.1"/><path d="M1746.8 547.6 H1739.4 Q1734.6 547.6 1734.6 551 Q1734.6 554.4 1739.4 554.4 H1741.4 M1741.7 547.6 V561.8 M1746 547.6 V561.8 M1740.2 561.8 H1747" fill="none" stroke="#374151" stroke-width="1.3" stroke-linecap="round" stroke-linejoin="round"/></svg>
<div class="r" style="left:0px;top:913px;width:1920px;height:32px;background:#f3f4f6;border-radius:0px;"></div>
<div class="r" style="left:0px;top:913px;width:1920px;height:1px;background:#e5e7eb;border-radius:0px;"></div>
<div class="r" style="left:1px;top:914px;width:1px;height:31px;background:#e5e7eb;border-radius:0px;"></div>
<div class="t" style="left:18.80px;top:925.90px;font-size:14px;line-height:17.5px;color:#6b7280;font-weight:normal;">Page</div>
<div class="r" style="left:59px;top:922.8px;width:20px;height:30px;background:#ffffff;border:1px solid #eceef1;border-radius:3px;"></div>
<div class="t" style="left:59.00px;width:20px;text-align:center;top:925.90px;font-size:14px;line-height:17.5px;color:#6b7280;font-weight:normal;">1</div>
<div class="t" style="left:88.00px;top:925.90px;font-size:14px;line-height:17.5px;color:#6b7280;font-weight:normal;">of</div>
<div class="t" style="left:108.80px;top:925.90px;font-size:14px;line-height:17.5px;color:#6b7280;font-weight:normal;">2</div>
<div class="r" style="left:1749.4px;top:914px;width:40.4px;height:30.6px;background:#e5e7eb;border:1px solid #d9dce1;border-radius:5px;"></div>
<div class="r" style="left:1791.5px;top:914px;width:40.5px;height:30.6px;background:#ffffff;border:1px solid #d9dce1;border-radius:5px;"></div>
<div class="r" style="left:1834px;top:914px;width:60px;height:30.6px;background:#ffffff;border:1px solid #d9dce1;border-radius:5px;"></div>
<svg class="s" style="left:0;top:0" width="1920" height="945"><rect x="1763" y="922.8" width="14.2" height="14.4" rx="2.6" fill="none" stroke="#374151" stroke-width="1.6"/><path d="M1766 926.3 H1774.3 M1766 928.5 H1774.3 M1766 930.6 H1774.3" stroke="#374151" stroke-width="1"/><path d="M1766 932.7 H1774.3" stroke="#374151" stroke-width="1.4"/><path d="M1810.6 935.4 H1805.6 Q1804.2 935.4 1804.2 934 V923.4 Q1804.2 922 1805.6 922 H1815.6 Q1817 922 1817 923.4 V928.6" fill="none" stroke="#374151" stroke-width="1.6"/><rect x="1807.1" y="924.2" width="6.8" height="3.7" fill="#6b7280"/><path d="M1807.1 929.6 H1813.9 M1807.1 931.5 H1810.9" stroke="#374151" stroke-width="1"/><circle cx="1816.6" cy="934.4" r="3.6" fill="#ffffff" stroke="#374151" stroke-width="1.6"/><path d="M1814 932 Q1816 935 1818.6 935.6" stroke="#374151" stroke-width="1.6" fill="none"/></svg>
<div class="t" style="left:1834.00px;width:60px;text-align:center;top:922.38px;font-size:13.5px;line-height:16.88px;color:#374151;font-weight:normal;">100%</div>
<div class="r" style="left:1625.2px;top:259.5px;width:118px;height:129.3px;background:#ffffff;border-radius:4px;box-shadow:0 4px 10px rgba(0,0,0,0.10), 0 0 2px rgba(0,0,0,0.08);"></div>
<div class="t" style="left:1637.90px;top:270.61px;font-size:14.3px;line-height:17.88px;color:#4b5563;font-weight:normal;">Edit</div>
<div class="t" style="left:1637.90px;top:300.61px;font-size:14.3px;line-height:17.88px;color:#4b5563;font-weight:normal;">Delete</div>
<div class="t" style="left:1637.90px;top:330.61px;font-size:14.3px;line-height:17.88px;color:#4b5563;font-weight:normal;">Reply</div>
<div class="t" style="left:1637.90px;top:360.61px;font-size:14.3px;line-height:17.88px;color:#4b5563;font-weight:normal;">Resolve</div>
</div></body></html>
